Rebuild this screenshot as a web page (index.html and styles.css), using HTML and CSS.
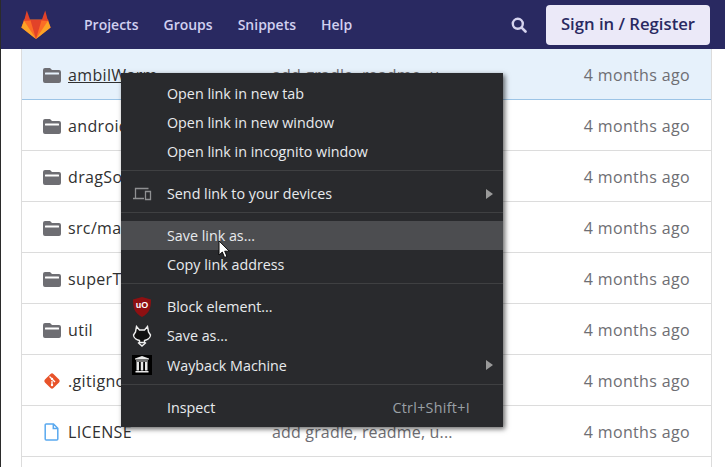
FILE: index.html
```html
<!DOCTYPE html>
<html lang="en">
<head>
    <meta charset="UTF-8">
    <meta name="viewport" content="width=device-width, initial-scale=1.0">
    <title>Repository files</title>
    <link rel="stylesheet" href="styles.css">
</head>
<body>
    <header class="navbar">
        <svg class="logo" viewBox="0 0 30 29" width="30" height="29">
            <path fill="#fc6d26" d="M15 29 0.400 17.400 3 9.500h24l2.600 7.900z"/>
            <path fill="#e24329" d="M15 29 9.400 10h11.200z"/>
            <path fill="#fca326" d="M0.400 17.400 15 29 3.200 11z"/>
            <path fill="#fca326" d="M29.600 17.400 15 29 26.800 11z"/>
            <path fill="#e24329" d="M3 11 5.800 0.500 9.400 10.500z"/>
            <path fill="#e24329" d="M27 11 24.200 0.500 20.600 10.500z"/>
        </svg>
        <nav class="nav-links">
            <a>Projects</a>
            <a>Groups</a>
            <a>Snippets</a>
            <a>Help</a>
        </nav>
        <svg class="search" viewBox="0 0 16 16" width="16" height="16">
            <circle cx="6.800" cy="6.800" r="5" fill="none" stroke="#d5d3ee" stroke-width="2.400"/>
            <path d="M10.600 10.600 14.500 14.500" stroke="#d5d3ee" stroke-width="2.600" stroke-linecap="round"/>
        </svg>
        <a class="signin">Sign in / Register</a>
    </header>

    <main class="files">
        <div class="row row-active">
            <svg class="ico" viewBox="0 0 18 16"><path fill="#6e6e73" d="M2 1h5l2 2h7a2 2 0 0 1 2 2v9a2 2 0 0 1-2 2H2a2 2 0 0 1-2-2V3a2 2 0 0 1 2-2z"/><rect x="2" y="5.500" width="14" height="2" rx="0.500" fill="#e6f1fb"/></svg>
            <a class="name link">ambilWarm</a><span class="msg">add gradle, readme, u...</span><span class="age">4 months ago</span>
        </div>
        <div class="row">
            <svg class="ico" viewBox="0 0 18 16"><path fill="#6e6e73" d="M2 1h5l2 2h7a2 2 0 0 1 2 2v9a2 2 0 0 1-2 2H2a2 2 0 0 1-2-2V3a2 2 0 0 1 2-2z"/><rect x="2" y="5.500" width="14" height="2" rx="0.500" fill="#fff"/></svg>
            <a class="name">android</a><span class="msg"></span><span class="age">4 months ago</span>
        </div>
        <div class="row">
            <svg class="ico" viewBox="0 0 18 16"><path fill="#6e6e73" d="M2 1h5l2 2h7a2 2 0 0 1 2 2v9a2 2 0 0 1-2 2H2a2 2 0 0 1-2-2V3a2 2 0 0 1 2-2z"/><rect x="2" y="5.500" width="14" height="2" rx="0.500" fill="#fff"/></svg>
            <a class="name">dragSort</a><span class="msg"></span><span class="age">4 months ago</span>
        </div>
        <div class="row">
            <svg class="ico" viewBox="0 0 18 16"><path fill="#6e6e73" d="M2 1h5l2 2h7a2 2 0 0 1 2 2v9a2 2 0 0 1-2 2H2a2 2 0 0 1-2-2V3a2 2 0 0 1 2-2z"/><rect x="2" y="5.500" width="14" height="2" rx="0.500" fill="#fff"/></svg>
            <a class="name">src/main</a><span class="msg"></span><span class="age">4 months ago</span>
        </div>
        <div class="row">
            <svg class="ico" viewBox="0 0 18 16"><path fill="#6e6e73" d="M2 1h5l2 2h7a2 2 0 0 1 2 2v9a2 2 0 0 1-2 2H2a2 2 0 0 1-2-2V3a2 2 0 0 1 2-2z"/><rect x="2" y="5.500" width="14" height="2" rx="0.500" fill="#fff"/></svg>
            <a class="name">superToast</a><span class="msg"></span><span class="age">4 months ago</span>
        </div>
        <div class="row">
            <svg class="ico" viewBox="0 0 18 16"><path fill="#6e6e73" d="M2 1h5l2 2h7a2 2 0 0 1 2 2v9a2 2 0 0 1-2 2H2a2 2 0 0 1-2-2V3a2 2 0 0 1 2-2z"/><rect x="2" y="5.500" width="14" height="2" rx="0.500" fill="#fff"/></svg>
            <a class="name">util</a><span class="msg"></span><span class="age">4 months ago</span>
        </div>
        <div class="row">
            <svg class="ico ico-tall" viewBox="0 0 18 18"><rect x="3" y="3" width="12" height="12" rx="2" transform="rotate(45 9 9)" fill="#e8532a"/><path d="M6.500 4.500 12 10M9 9v4" stroke="#fff" stroke-width="1.300"/><circle cx="9" cy="7" r="1.200" fill="#fff"/><circle cx="9" cy="13" r="1.200" fill="#fff"/></svg>
            <a class="name">.gitignore</a><span class="msg"></span><span class="age">4 months ago</span>
        </div>
        <div class="row">
            <svg class="ico ico-tall" viewBox="0 0 18 18"><path fill="none" stroke="#5aa9ef" stroke-width="1.500" d="M3.200 1h7.300l4.300 4.300V16a1 1 0 0 1-1 1H3.200a1 1 0 0 1-1-1V2a1 1 0 0 1 1-1zM10.300 1v4.500h4.500"/></svg>
            <a class="name">LICENSE</a><span class="msg">add gradle, readme, u...</span><span class="age">4 months ago</span>
        </div>
        <div class="row-end"></div>
    </main>

    <div class="ctx-menu">
        <div class="ctx-item">Open link in new tab</div>
        <div class="ctx-item">Open link in new window</div>
        <div class="ctx-item">Open link in incognito window</div>
        <hr class="ctx-sep">
        <div class="ctx-item">
            <svg class="ctx-ico" viewBox="0 0 20 14"><path fill="none" stroke="#8f9092" stroke-width="1.300" d="M3.500 11V1.500h13M1 11.500h11M13.500 4.500h5v8h-5z"/></svg>
            Send link to your devices<span class="arrow"></span>
        </div>
        <hr class="ctx-sep">
        <div class="ctx-item ctx-hover">Save link as...</div>
        <div class="ctx-item">Copy link address</div>
        <hr class="ctx-sep">
        <div class="ctx-item">
            <svg class="ctx-ico" viewBox="0 0 20 22"><path fill="#8e1012" d="M10 1 19 3.500c0 8.500-1.500 13.500-9 17.500C2.500 17 1 12 1 3.500z"/><text class="ub-mark" x="10" y="12" text-anchor="middle">uO</text></svg>
            Block element...
        </div>
        <div class="ctx-item">
            <svg class="ctx-ico" viewBox="0 0 20 22"><path fill="#111" stroke="#f0f0f0" stroke-width="1.400" d="M4.500 1.500 7.500 5h5l3-3.500 1 5.500 2 3c0 3-3.500 5-6 5.500v2h-5v-2C5 15 1.500 13 1.500 10l2-3z"/><path fill="none" stroke="#f0f0f0" stroke-width="1.400" d="M6 17.500 10 21l4-3.500"/></svg>
            Save as...
        </div>
        <div class="ctx-item">
            <svg class="ctx-ico ctx-ico-box" viewBox="0 0 20 20"><rect width="20" height="20" fill="#000"/><path fill="#e8e8e8" d="M3 3.500 10 1l7 2.500v1H3zM4 5.500h12v1H4zM4.500 7h2.500v8.500H4.500zM8.800 7h2.400v8.500H8.800zM13 7h2.500v8.500H13zM3.500 16h13v1.500h-13z"/></svg>
            Wayback Machine<span class="arrow"></span>
        </div>
        <hr class="ctx-sep">
        <div class="ctx-item">Inspect<span class="shortcut">Ctrl+Shift+I</span></div>
    </div>

    <svg class="cursor" viewBox="0 0 14 22" width="13" height="20"><path fill="#fff" stroke="#000" stroke-width="1" d="M1 1v15.500l3.600-3.300 2.500 6 2.600-1.100-2.500-5.800h5z"/></svg>
</body>
</html>
```

FILE: styles.css
```css
* {
    box-sizing: border-box;
}
body {
    margin: 0;
    height: 467px;
    overflow: hidden;
    background: #fff;
    border-left: 1px solid #2b2b2b;
    font-family: "Open Sans", "Liberation Sans", sans-serif;
    color: #303030;
}
.navbar {
    display: flex;
    align-items: center;
    height: 49px;
    background: #292961;
    padding: 0 15px 0 20px;
}
.logo {
    flex: none;
    margin-top: -1px;
}
.nav-links {
    display: flex;
    gap: 25px;
    margin-left: 33px;
    flex: 1;
}
.nav-links a {
    color: #d1d0f0;
    font-size: 14px;
    font-weight: 600;
}
.search {
    margin-right: 19px;
}
.signin {
    background: #ebe9f8;
    color: #292961;
    border-radius: 4px;
    height: 40px;
    width: 164px;
    line-height: 38px;
    text-align: center;
    font-size: 16.700px;
    font-weight: 600;
}
.files {
    margin: 0 13px 0 20px;
    border-left: 1px solid #dcdcdc;
    border-right: 1px solid #dcdcdc;
}
.row {
    display: flex;
    align-items: center;
    height: 51px;
    padding: 1px 21px 0;
    border-bottom: 1px solid #dcdcdc;
    font-size: 16px;
    letter-spacing: 0.350px;
}
.row-end {
    height: 11px;
}
.row-active {
    background: #e6f1fb;
    border-bottom-color: #9cc4e6;
}
.ico {
    width: 18px;
    height: 16px;
    flex: none;
    margin-right: 7px;
}
.ico-tall {
    height: 18px;
}
.name {
    width: 204px;
    flex: none;
    white-space: nowrap;
}
.link {
    text-decoration: underline;
}
.msg {
    flex: 1;
    color: #6e6e73;
    letter-spacing: 0.170px;
}
.age {
    color: #6e6e73;
}
.ctx-menu {
    position: absolute;
    left: 121px;
    top: 73px;
    width: 382px;
    height: 354px;
    padding: 5.600px 0 0;
    background: #292a2d;
    box-shadow: 2px 2px 5px rgba(0, 0, 0, 0.6);
    color: #e8eaed;
    font-size: 14.300px;
}
.ctx-item {
    display: flex;
    align-items: center;
    height: 29.200px;
    padding: 0 10px 0 46px;
    position: relative;
}
.ctx-hover {
    background: #4c4d50;
}
.ctx-sep {
    border: 0;
    border-top: 1px solid #3f4042;
    margin: 4px 0 7.800px;
}
.ctx-ico {
    position: absolute;
    left: 11px;
    top: 50%;
    width: 20px;
    height: 22px;
    transform: translateY(-50%);
}
.ctx-ico-box {
    height: 20px;
}
.ub-mark {
    fill: #fff;
    font-size: 9px;
    font-weight: 700;
    font-family: "Liberation Sans", sans-serif;
}
.arrow {
    margin-left: auto;
    border-left: 7px solid #9a9a9a;
    border-top: 5px solid transparent;
    border-bottom: 5px solid transparent;
}
.shortcut {
    margin-left: auto;
    padding-right: 23px;
    color: #9aa0a6;
    letter-spacing: 0.300px;
}
.cursor {
    position: absolute;
    left: 218px;
    top: 240px;
}
```
